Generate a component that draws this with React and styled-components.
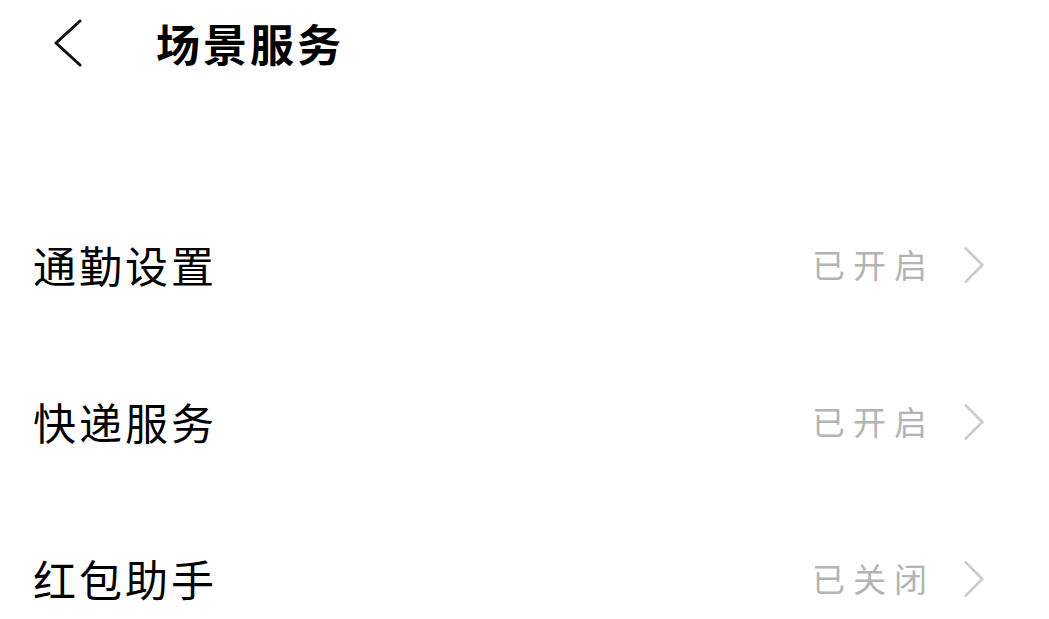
import styled, { createGlobalStyle } from "styled-components";

const GlobalStyle = createGlobalStyle`
  html, body {
    margin: 0;
    padding: 0;
    background: #ffffff;
  }
  body {
    font-family: "Noto Sans CJK SC", "Noto Sans", sans-serif;
  }
`;

const Page = styled.div`
  width: 1049px;
  height: 619px;
  overflow: hidden;
  background: #ffffff;
`;

const Header = styled.div`
  height: 85px;
  display: flex;
  align-items: center;
  padding-left: 50px;
  gap: 70px;
`;

const BackButton = styled.div`
  width: 36px;
  height: 48px;
  display: flex;
  align-items: center;
  justify-content: center;
`;

const Title = styled.h1`
  margin: 0;
  font-size: 44px;
  font-weight: 700;
  color: #000000;
  letter-spacing: 3px;
  line-height: 1;
`;

const List = styled.div`
  margin-top: 101px;
  display: flex;
  flex-direction: column;
`;

const Row = styled.div`
  height: 157px;
  display: flex;
  align-items: center;
  justify-content: space-between;
  padding: 0 63px 0 33px;
`;

const Label = styled.span`
  font-size: 43px;
  color: #000000;
  letter-spacing: 3px;
  line-height: 1;
`;

const Status = styled.div`
  display: flex;
  align-items: center;
  gap: 27px;
`;

const StatusText = styled.span`
  font-size: 33px;
  color: #b4b4b4;
  letter-spacing: 8px;
  line-height: 1;
`;

function Chevron({ dir, color, width, height, stroke }) {
  const d = dir === "left" ? "M28 2 L4 24 L28 46" : "M4 2 L22 20 L4 38";
  const vb = dir === "left" ? "0 0 32 48" : "0 0 26 40";
  return (
    <svg width={width} height={height} viewBox={vb} fill="none">
      <path d={d} stroke={color} strokeWidth={stroke} strokeLinecap="round" strokeLinejoin="round" />
    </svg>
  );
}

const items = [
  { label: "通勤设置", status: "已开启" },
  { label: "快递服务", status: "已开启" },
  { label: "红包助手", status: "已关闭" },
];

export default function App() {
  return (
    <Page>
      <GlobalStyle />
      <Header>
        <BackButton>
          <Chevron dir="left" color="#111" width={32} height={48} stroke={3} />
        </BackButton>
        <Title>场景服务</Title>
      </Header>
      <List>
        {items.map((it) => (
          <Row key={it.label}>
            <Label>{it.label}</Label>
            <Status>
              <StatusText>{it.status}</StatusText>
              <Chevron dir="right" color="#cccccc" width={24} height={38} stroke={3} />
            </Status>
          </Row>
        ))}
      </List>
    </Page>
  );
}
